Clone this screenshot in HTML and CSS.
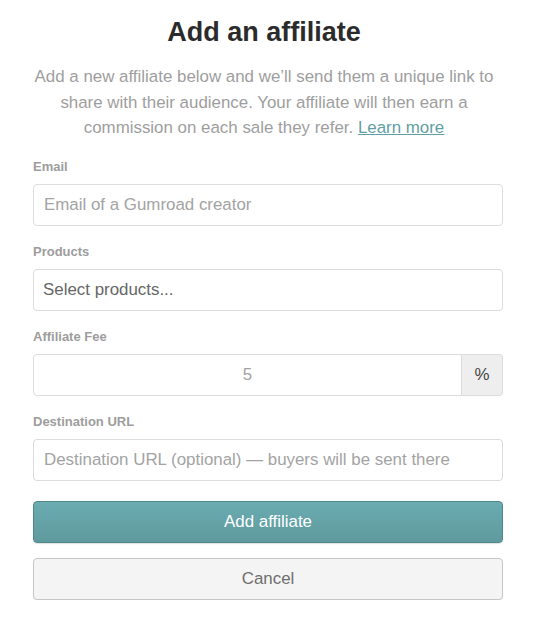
FILE: index.html
```html
<!DOCTYPE html>
<html lang="en">
<head>
<meta charset="utf-8">
<title>Add an affiliate</title>
<link rel="stylesheet" href="styles.css">
</head>
<body>
<main class="modal">
  <header class="intro">
    <h1 class="title">Add an affiliate</h1>
    <p class="lead">Add a new affiliate below and we’ll send them a unique link to share with their audience. Your affiliate will then earn a commission on each sale they refer. <a class="link" href="#">Learn more</a></p>
  </header>
  <form class="form">
    <div class="field">
      <label class="label" for="email">Email</label>
      <input class="input" id="email" type="text" placeholder="Email of a Gumroad creator">
    </div>
    <div class="field">
      <label class="label" for="products">Products</label>
      <div class="select" id="products">Select products...</div>
    </div>
    <div class="field">
      <label class="label" for="fee">Affiliate Fee</label>
      <div class="group">
        <input class="input input-center" id="fee" type="text" placeholder="5">
        <span class="addon">%</span>
      </div>
    </div>
    <div class="field">
      <label class="label" for="url">Destination URL</label>
      <input class="input" id="url" type="text" placeholder="Destination URL (optional) — buyers will be sent there">
    </div>
    <div class="actions">
      <button class="btn btn-primary" type="button">Add affiliate</button>
      <button class="btn btn-default" type="button">Cancel</button>
    </div>
  </form>
</main>
</body>
</html>
```
FILE: styles.css
```css
html, body {
  margin: 0;
  padding: 0;
  background: #ffffff;
}
body {
  font-family: "Liberation Sans", Arial, Helvetica, sans-serif;
  color: #333;
}
.modal {
  padding: 16px 30px 0 33px;
}
.intro {
  text-align: center;
  padding-right: 8px;
}
.title {
  margin: 0;
  font-size: 27px;
  line-height: 32px;
  font-weight: bold;
  color: #2b2b2b;
}
.lead {
  margin: 16px 0 0;
  font-size: 16.9px;
  line-height: 25.5px;
  color: #9e9e9e;
}
.link {
  color: #5f9fa3;
  text-decoration: underline;
}
.form {
  display: flex;
  flex-direction: column;
  margin-top: 18px;
}
.field {
  display: flex;
  flex-direction: column;
  gap: 9px;
  margin-bottom: 18px;
}
.label {
  font-size: 13px;
  line-height: 16px;
  font-weight: bold;
  color: #9d9d9d;
}
.input, .select {
  box-sizing: border-box;
  width: 100%;
  height: 42px;
  margin: 0;
  padding: 0 10px;
  border: 1px solid #dcdcdc;
  border-radius: 4px;
  background: #fff;
  font-family: inherit;
  font-size: 16.9px;
  color: #555;
  outline: none;
}
.input::placeholder {
  color: #a3a3a3;
  opacity: 1;
}
.select {
  display: flex;
  align-items: center;
  padding: 0 9px;
  color: #666;
}
.group {
  display: flex;
}
.group .input {
  flex: 1;
  border-radius: 4px 0 0 4px;
}
.input-center {
  text-align: center;
}
.addon {
  box-sizing: border-box;
  width: 41px;
  height: 42px;
  display: flex;
  align-items: center;
  justify-content: center;
  background: #eeeeee;
  border: 1px solid #dcdcdc;
  border-left: none;
  border-radius: 0 4px 4px 0;
  font-size: 16.9px;
  color: #444;
}
.actions {
  display: flex;
  flex-direction: column;
  gap: 15px;
  margin-top: 2px;
}
.btn {
  box-sizing: border-box;
  width: 100%;
  height: 42px;
  border-radius: 4px;
  font-family: inherit;
  font-size: 16.9px;
  cursor: pointer;
  margin: 0;
}
.btn-primary {
  background: linear-gradient(#6aacb0, #5f9a9e);
  border: 1px solid #4f878b;
  color: #ffffff;
  box-shadow: 0 1px 1px rgba(0,0,0,0.12);
}
.btn-default {
  background: #f4f4f4;
  border: 1px solid #c6c6c6;
  color: #6e6e6e;
  box-shadow: 0 1px 1px rgba(0,0,0,0.06);
}
```
